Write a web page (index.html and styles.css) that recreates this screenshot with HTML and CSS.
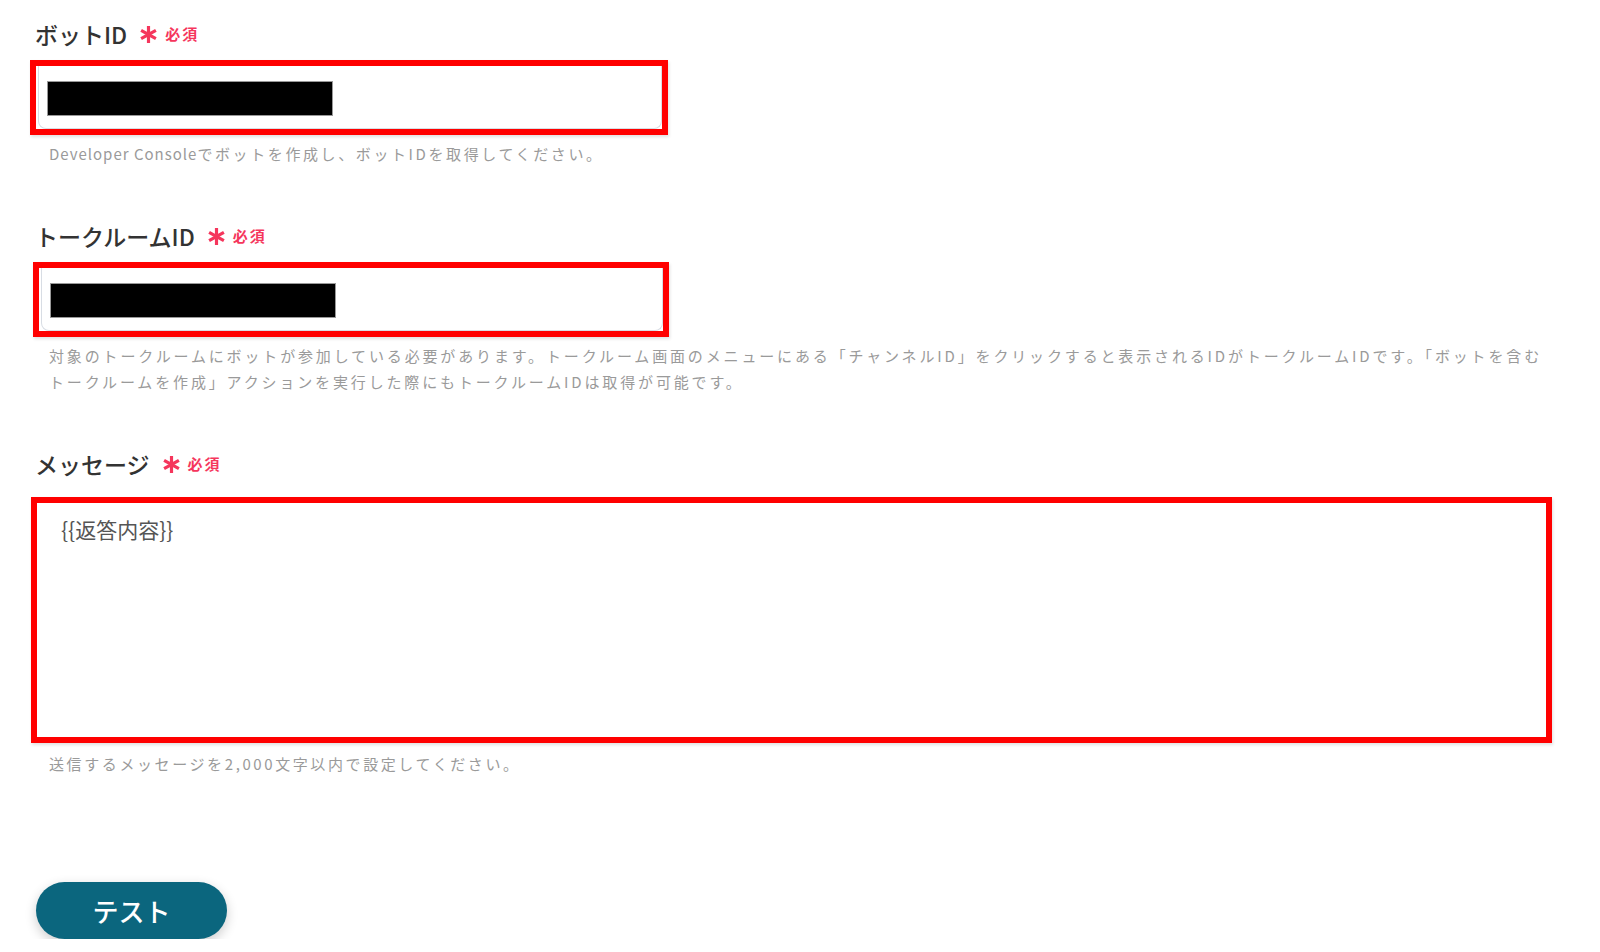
FILE: index.html
```html
<!DOCTYPE html>
<html lang="ja">
<head>
  <meta charset="UTF-8">
  <meta name="viewport" content="width=device-width, initial-scale=1.0">
  <title>LINE WORKS 設定</title>
  <link rel="stylesheet" href="styles.css">
</head>
<body>
  <main class="form">
    <div class="field">
      <label class="label">ボットID
        <span class="required">
          <svg class="mark" viewBox="0 0 18 18"><path d="M9 1v16M2 5l14 8M2 13l14-8"/></svg>
          <span class="must">必須</span>
        </span>
      </label>
      <div class="mark-box box-id">
        <div class="input"><span class="redact"></span></div>
      </div>
      <p class="help"><span class="latin">Developer Console</span>でボットを作成し、ボットIDを取得してください。</p>
    </div>

    <div class="field">
      <label class="label">トークルームID
        <span class="required">
          <svg class="mark" viewBox="0 0 18 18"><path d="M9 1v16M2 5l14 8M2 13l14-8"/></svg>
          <span class="must">必須</span>
        </span>
      </label>
      <div class="mark-box box-room">
        <div class="input"><span class="redact"></span></div>
      </div>
      <p class="help help-wide">対象のトークルームにボットが参加している必要があります。トークルーム画面のメニューにある「チャンネルID」をクリックすると表示されるIDがトークルームIDです。「ボットを含むトークルームを作成」アクションを実行した際にもトークルームIDは取得が可能です。</p>
    </div>

    <div class="field field-msg">
      <label class="label label-msg">メッセージ
        <span class="required">
          <svg class="mark" viewBox="0 0 18 18"><path d="M9 1v16M2 5l14 8M2 13l14-8"/></svg>
          <span class="must">必須</span>
        </span>
      </label>
      <div class="mark-box box-msg">
        <div class="textarea">{{返答内容}}</div>
      </div>
      <p class="help">送信するメッセージを2,000文字以内で設定してください。</p>
    </div>

    <button class="test" type="button">テスト</button>
  </main>
</body>
</html>
```

FILE: styles.css
```css
body {
  margin: 0;
  padding: 0;
  background: #fff;
  font-family: "Noto Sans CJK JP", "Noto Sans", sans-serif;
  color: #333;
}
.form {
  padding: 19px 48px 0 30px;
}
.field {
  margin-bottom: 54px;
}
.field-msg {
  margin-bottom: 105px;
}
.label {
  display: flex;
  align-items: center;
  height: 30px;
  padding-left: 5px;
  margin-bottom: 11px;
  font-size: 23px;
  font-weight: 500;
  line-height: 30px;
  color: #333;
}
.label-msg {
  margin-bottom: 18px;
}
.required {
  display: flex;
  align-items: center;
  margin-left: 12px;
  color: #f5365c;
}
.mark {
  width: 19px;
  height: 19px;
  fill: none;
  stroke: #f5365c;
  stroke-width: 3;
}
.must {
  margin-left: 7px;
  font-size: 15px;
  font-weight: bold;
  letter-spacing: 2px;
}
.mark-box {
  border: 6px solid #ff0000;
  box-sizing: border-box;
  box-shadow: 1px 2px 3px rgba(0, 0, 0, 0.12);
}
.box-id {
  width: 638px;
  height: 75px;
}
.box-room {
  width: 636px;
  height: 75px;
  margin-left: 3px;
}
.box-msg {
  width: 1521px;
  height: 246px;
  margin-left: 1px;
}
.input {
  height: 100%;
  box-sizing: border-box;
  margin-left: 2px;
  padding: 15px 8px;
  border: 1px solid #d8dde4;
  border-top: none;
  border-radius: 0 0 8px 8px;
}
.redact {
  display: block;
  width: 284px;
  height: 33px;
  background: #000;
  border: 1px solid #999;
}
.textarea {
  height: 100%;
  box-sizing: border-box;
  padding: 12px 24px;
  font-size: 21px;
  line-height: 28px;
  color: #555;
  font-feature-settings: "palt";
}
.help {
  margin: 6px 0 0;
  padding: 0 8px 0 19px;
  font-size: 15px;
  line-height: 26px;
  letter-spacing: 2.6px;
  line-break: strict;
  color: #9a9a9a;
}
.help-wide {
  letter-spacing: 2.85px;
}
.field-msg .help {
  margin-top: 8px;
}
.latin {
  letter-spacing: 1px;
}
.test {
  display: block;
  width: 191px;
  height: 57px;
  margin-left: 6px;
  border: none;
  border-radius: 29px;
  background: #0b667e;
  color: #fff;
  font-family: "Noto Sans CJK JP", sans-serif;
  font-size: 26px;
  font-weight: 500;
  box-shadow: 0 4px 12px rgba(0, 0, 0, 0.2);
  cursor: pointer;
}
```
